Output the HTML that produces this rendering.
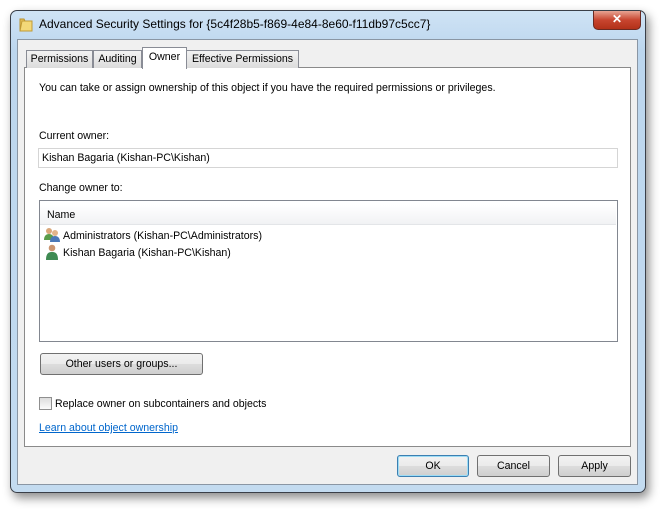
<!DOCTYPE html>
<html><head><style>
body{margin:0;width:664px;height:510px;background:#fff;font-family:"Liberation Sans",sans-serif;font-size:10.6px;color:#000;position:relative;overflow:hidden}
.win{position:absolute;left:10px;top:10px;width:634px;height:481px;border:1px solid #3a3f48;border-radius:7px;background:linear-gradient(180deg,#cfe3f5 0,#bcd6ee 40px,#c3dbf0 100%);box-shadow:3px 5px 10px rgba(0,0,0,.45)}
.client{position:absolute;left:17px;top:39px;width:619px;height:444px;background:#f0f0f0;border:1px solid #8a96a4}
.abs{position:absolute}
.title{left:39px;top:17px;font-size:12px}
.close{left:593px;top:11px;width:46px;height:18px;border:1px solid #6b2a22;border-radius:0 0 5px 5px;background:linear-gradient(#e8a493,#c8452f 50%,#b23119);color:#fff;font-weight:bold;text-align:center;line-height:17px;font-size:12px;border-top:none}
.panel{left:24px;top:67px;width:605px;height:378px;background:#fff;border:1px solid #8a8a8a}
.tab{top:50px;height:17px;border:1px solid #898c95;border-bottom:none;background:linear-gradient(#f2f2f2,#dcdcdc);line-height:17px;text-align:center}
.btn{height:20px;border:1px solid #707070;border-radius:3px;background:linear-gradient(#f2f2f2 0,#ebebeb 50%,#dddddd 51%,#cfcfcf);text-align:center;line-height:20px}
</style></head><body>
<div class="win"></div>
<div class="client"></div>
<svg class="abs" style="left:19px;top:16px" width="14" height="16" viewBox="0 0 14 16"><path d="M1 3h4l1 2h7v10H1z" fill="#e6c15a" stroke="#b8902c"/><path d="M3 5h10v10H1z" fill="#f3d878" stroke="#c09a35"/></svg>
<div class="abs title">Advanced Security Settings for {5c4f28b5-f869-4e84-8e60-f11db97c5cc7}</div>
<div class="abs close">✕</div>
<div class="abs panel"></div>
<div class="abs tab" style="left:26px;width:65px">Permissions</div>
<div class="abs tab" style="left:93px;width:47px">Auditing</div>
<div class="abs tab" style="left:186px;width:111px">Effective Permissions</div>
<div class="abs tab" style="left:142px;top:47px;height:21px;width:43px;background:#fff;line-height:18px">Owner</div>
<div class="abs" style="left:39px;top:82px">You can take or assign ownership of this object if you have the required permissions or privileges.</div>
<div class="abs" style="left:39px;top:130px">Current owner:</div>
<div class="abs" style="left:38px;top:148px;width:580px;height:20px;border:1px solid #d5d5d5;line-height:19px;padding-left:3px;box-sizing:border-box">Kishan Bagaria (Kishan-PC\Kishan)</div>
<div class="abs" style="left:39px;top:182px">Change owner to:</div>
<div class="abs" style="left:39px;top:200px;width:579px;height:142px;border:1px solid #828790;box-sizing:border-box"></div>
<div class="abs" style="left:40px;top:205px;width:576px;height:19px;background:linear-gradient(#fff,#f1f2f4);border-bottom:1px solid #e3e5e8"></div>
<div class="abs" style="left:47px;top:209px">Name</div>
<svg class="abs" style="left:44px;top:227px" width="17" height="15" viewBox="0 0 17 15"><circle cx="5" cy="4" r="3" fill="#d9a77a"/><path d="M0 13c0-4 2-6 5-6s5 2 5 6z" fill="#5a9c4a"/><circle cx="11" cy="6" r="3" fill="#e2b48a"/><path d="M6 15c0-4 2-6 5-6s5 2 5 6z" fill="#4a78b8"/></svg>
<div class="abs" style="left:63px;top:230px">Administrators (Kishan-PC\Administrators)</div>
<svg class="abs" style="left:45px;top:244px" width="14" height="16" viewBox="0 0 14 16"><circle cx="7" cy="4" r="3.3" fill="#c99470"/><path d="M1 16c0-6 2-8 6-8s6 2 6 8z" fill="#3f8a52"/></svg>
<div class="abs" style="left:63px;top:247px">Kishan Bagaria (Kishan-PC\Kishan)</div>
<div class="abs btn" style="left:40px;top:353px;width:161px">Other users or groups...</div>
<div class="abs" style="left:39px;top:397px;width:11px;height:11px;border:1px solid #8f8f8f;background:linear-gradient(#ddd,#fbfbfb)"></div>
<div class="abs" style="left:55px;top:398px">Replace owner on subcontainers and objects</div>
<div class="abs" style="left:39px;top:422px;color:#0066cc;text-decoration:underline">Learn about object ownership</div>
<div class="abs btn" style="left:397px;top:455px;width:70px;border-color:#3c7fb1;box-shadow:inset 0 0 0 1px #9ddcf5">OK</div>
<div class="abs btn" style="left:477px;top:455px;width:71px">Cancel</div>
<div class="abs btn" style="left:558px;top:455px;width:71px">Apply</div>
</body></html>
